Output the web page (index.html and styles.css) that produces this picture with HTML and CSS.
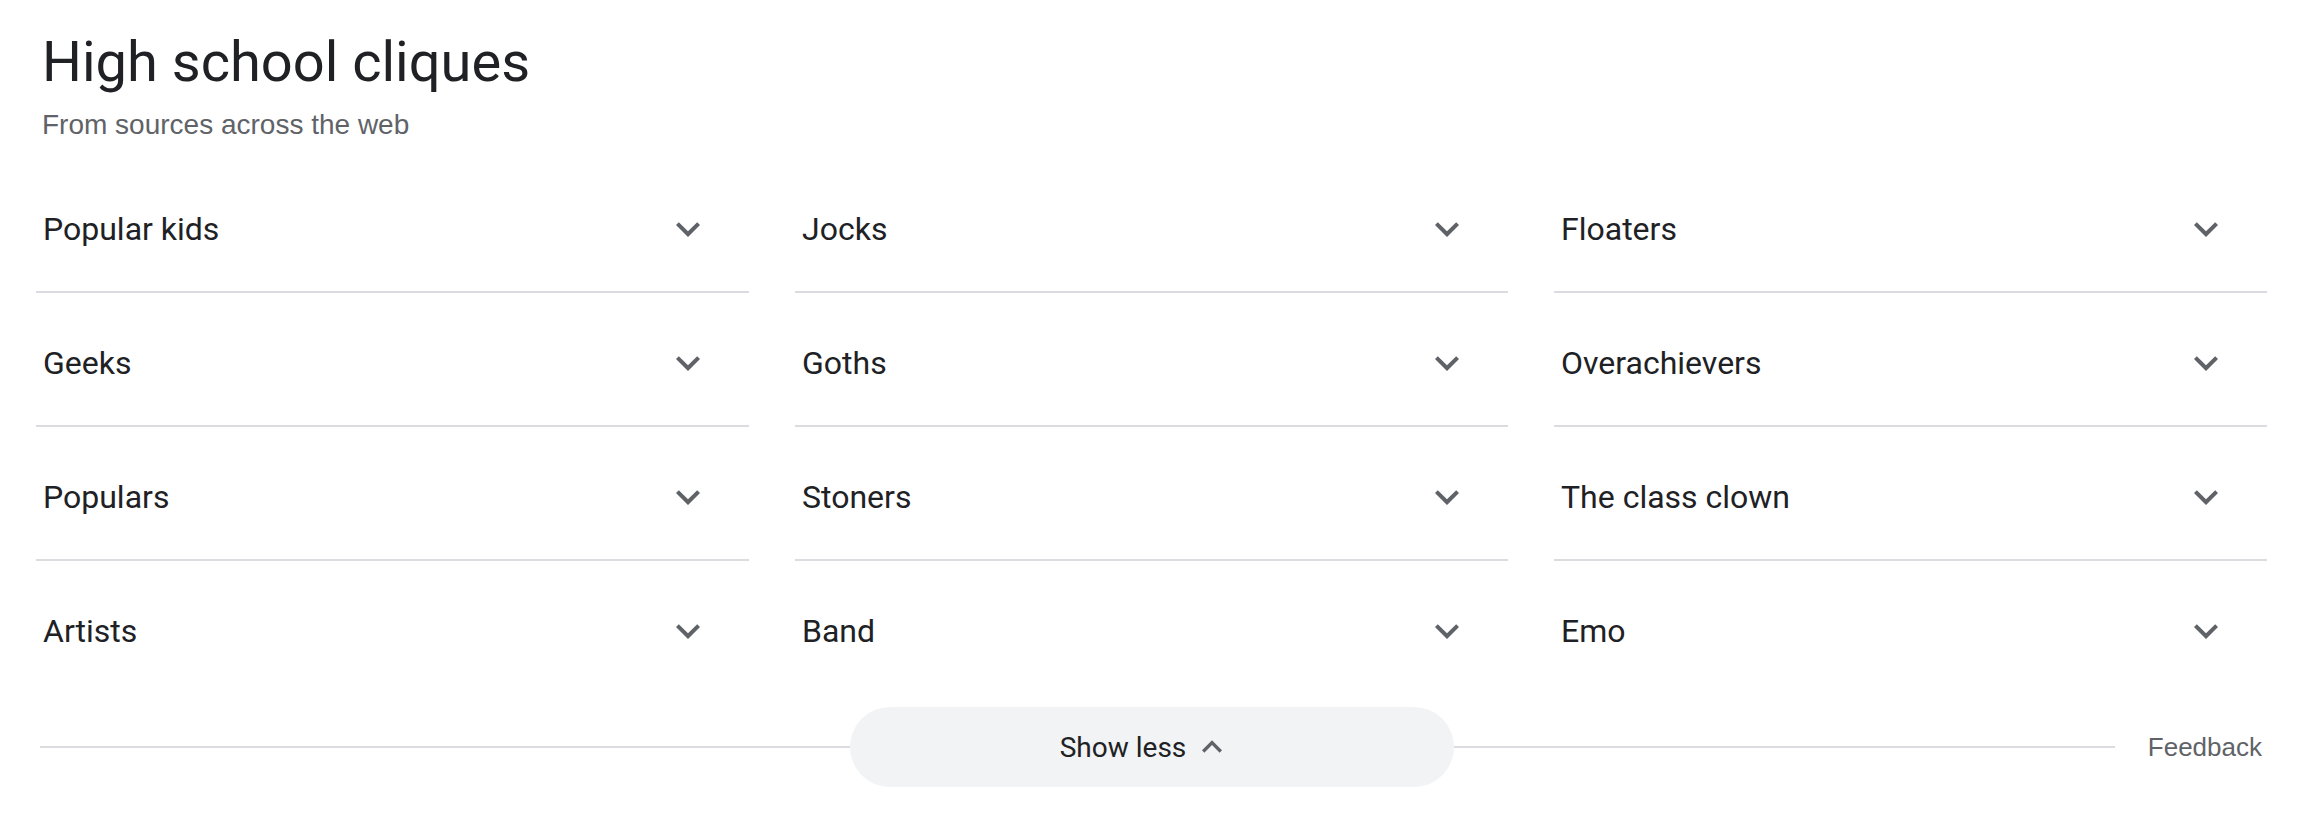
FILE: index.html
```html
<!DOCTYPE html>
<html lang="en">
<head>
<meta charset="utf-8">
<title>High school cliques</title>
<link rel="stylesheet" href="styles.css">
</head>
<body>
<div class="wrap">
  <header class="head">
    <h1 class="title">High school cliques</h1>
    <div class="sub">From sources across the web</div>
  </header>
  <div class="grid">
    <div class="item"><span class="label">Popular kids</span><svg class="chev" viewBox="0 0 24 24"><path d="M16.59 8.59L12 13.17 7.41 8.59 6 10l6 6 6-6z"/></svg></div>
    <div class="item"><span class="label">Jocks</span><svg class="chev" viewBox="0 0 24 24"><path d="M16.59 8.59L12 13.17 7.41 8.59 6 10l6 6 6-6z"/></svg></div>
    <div class="item"><span class="label">Floaters</span><svg class="chev" viewBox="0 0 24 24"><path d="M16.59 8.59L12 13.17 7.41 8.59 6 10l6 6 6-6z"/></svg></div>
    <div class="item"><span class="label">Geeks</span><svg class="chev" viewBox="0 0 24 24"><path d="M16.59 8.59L12 13.17 7.41 8.59 6 10l6 6 6-6z"/></svg></div>
    <div class="item"><span class="label">Goths</span><svg class="chev" viewBox="0 0 24 24"><path d="M16.59 8.59L12 13.17 7.41 8.59 6 10l6 6 6-6z"/></svg></div>
    <div class="item"><span class="label">Overachievers</span><svg class="chev" viewBox="0 0 24 24"><path d="M16.59 8.59L12 13.17 7.41 8.59 6 10l6 6 6-6z"/></svg></div>
    <div class="item"><span class="label">Populars</span><svg class="chev" viewBox="0 0 24 24"><path d="M16.59 8.59L12 13.17 7.41 8.59 6 10l6 6 6-6z"/></svg></div>
    <div class="item"><span class="label">Stoners</span><svg class="chev" viewBox="0 0 24 24"><path d="M16.59 8.59L12 13.17 7.41 8.59 6 10l6 6 6-6z"/></svg></div>
    <div class="item"><span class="label">The class clown</span><svg class="chev" viewBox="0 0 24 24"><path d="M16.59 8.59L12 13.17 7.41 8.59 6 10l6 6 6-6z"/></svg></div>
    <div class="item last"><span class="label">Artists</span><svg class="chev" viewBox="0 0 24 24"><path d="M16.59 8.59L12 13.17 7.41 8.59 6 10l6 6 6-6z"/></svg></div>
    <div class="item last"><span class="label">Band</span><svg class="chev" viewBox="0 0 24 24"><path d="M16.59 8.59L12 13.17 7.41 8.59 6 10l6 6 6-6z"/></svg></div>
    <div class="item last"><span class="label">Emo</span><svg class="chev" viewBox="0 0 24 24"><path d="M16.59 8.59L12 13.17 7.41 8.59 6 10l6 6 6-6z"/></svg></div>
  </div>
  <div class="foot">
    <div class="side left"><div class="rule"></div></div>
    <button class="more"><span>Show less</span><svg class="up" viewBox="0 0 24 24"><path d="M7.41 15.41L12 10.83l4.59 4.58L18 14l-6-6-6 6z"/></svg></button>
    <div class="side right"><div class="rule"></div><span class="feedback">Feedback</span></div>
  </div>
</div>
</body>
</html>
```
FILE: styles.css
```css
html, body {
  margin: 0;
  padding: 0;
  background: #ffffff;
}
body {
  font-family: Roboto, "Liberation Sans", Arial, sans-serif;
  color: #202124;
}
.wrap {
  padding: 0 37px 0 36px;
}
.head {
  padding: 28px 0 0 6px;
}
.title {
  margin: 0;
  font-family: Roboto, "Liberation Sans", Arial, sans-serif;
  font-weight: 400;
  font-size: 56px;
  line-height: 68px;
  color: #202124;
}
.sub {
  margin-top: 11px;
  font-family: "Liberation Sans", Arial, sans-serif;
  font-size: 28px;
  line-height: 36px;
  color: #5f6368;
}
.grid {
  margin-top: 16px;
  display: grid;
  grid-template-columns: repeat(3, 1fr);
  column-gap: 46px;
}
.item {
  box-sizing: border-box;
  height: 134px;
  display: flex;
  align-items: center;
  justify-content: space-between;
  padding: 8px 37px 0 7px;
  border-bottom: 2px solid #dadce0;
}
.item.last {
  border-bottom-color: transparent;
}
.label {
  font-size: 32px;
  line-height: 40px;
  color: #202124;
}
.chev {
  width: 48px;
  height: 48px;
  fill: #5f6368;
  flex: none;
}
.foot {
  margin-top: 12px;
  display: grid;
  grid-template-columns: 1fr auto 1fr;
  align-items: center;
  height: 80px;
}
.side {
  display: flex;
  align-items: center;
}
.left {
  padding-left: 4px;
}
.rule {
  flex: 1;
  height: 2px;
  background: #dadce0;
}
.more {
  box-sizing: border-box;
  width: 604px;
  height: 80px;
  border: 0;
  border-radius: 40px;
  background: #f1f3f4;
  display: flex;
  align-items: center;
  justify-content: center;
  gap: 6px;
  padding: 0 11px 0 0;
  font-family: Roboto, "Liberation Sans", Arial, sans-serif;
  font-size: 28px;
  color: #202124;
}
.up {
  width: 40px;
  height: 40px;
  fill: #5f6368;
}
.feedback {
  margin-left: 33px;
  margin-right: 5px;
  font-family: "Liberation Sans", Arial, sans-serif;
  font-size: 26px;
  color: #5f6368;
}
```
